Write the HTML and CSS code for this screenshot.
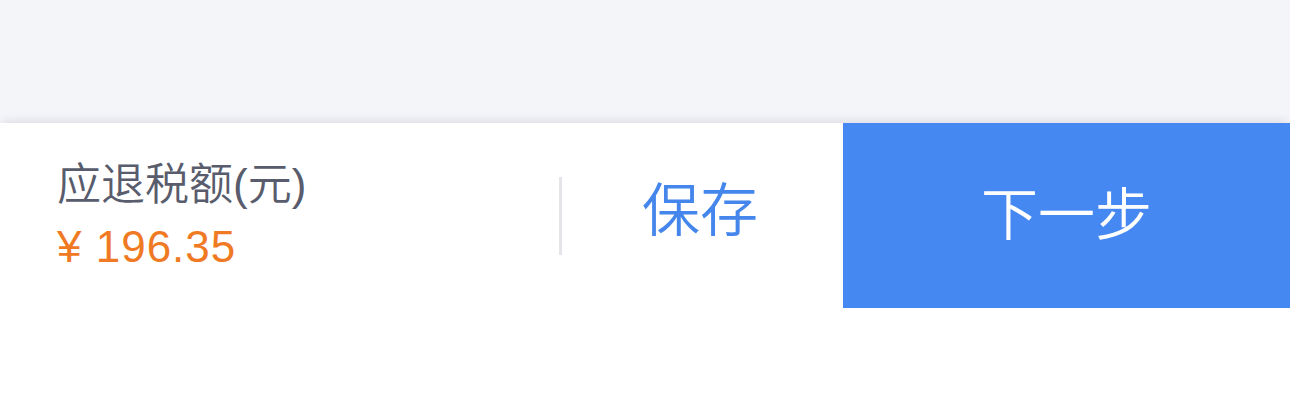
FILE: index.html
```html
<!DOCTYPE html>
<html lang="zh-CN">
<head>
<meta charset="utf-8">
<title>应退税额</title>
<link rel="stylesheet" href="styles.css">
</head>
<body>
<div class="page">
  <div class="content"></div>
  <div class="footer">
    <div class="info">
      <div class="label">应退税额(元)</div>
      <div class="amount">¥ 196.35</div>
    </div>
    <div class="divider"></div>
    <div class="save">保存</div>
    <div class="next">下一步</div>
  </div>
  <div class="safe"></div>
</div>
</body>
</html>
```

FILE: styles.css
```css
html, body {
  margin: 0;
  padding: 0;
  background: #ffffff;
}
body {
  font-family: "Liberation Sans", "Noto Sans CJK SC", sans-serif;
  width: 1290px;
  height: 412px;
  overflow: hidden;
}
.page {
  display: flex;
  flex-direction: column;
  height: 412px;
}
.content {
  height: 123px;
  background: #f4f5f9;
  flex: none;
}
.footer {
  height: 185px;
  flex: none;
  display: flex;
  align-items: center;
  background: #ffffff;
  box-shadow: 0 -5px 9px -3px rgba(40, 50, 80, 0.12);
  position: relative;
}
.info {
  flex: 1;
  padding-left: 57px;
  display: flex;
  flex-direction: column;
  gap: 12px;
}
.label {
  font-size: 44px;
  line-height: 50px;
  font-weight: 350;
  color: #585c6c;
}
.amount {
  font-size: 44px;
  line-height: 50px;
  letter-spacing: 1px;
  color: #f07a23;
}
.divider {
  width: 3px;
  height: 78px;
  background: #e4e5e9;
  flex: none;
}
.save {
  width: 281px;
  height: 185px;
  flex: none;
  text-align: center;
  font-size: 58px;
  font-weight: 350;
  color: #4486eb;
  line-height: 185px;
  margin-top: -10px;
  padding-right: 5px;
  box-sizing: border-box;
}
.next {
  width: 447px;
  height: 185px;
  flex: none;
  background: #4588f1;
  color: #ffffff;
  font-size: 57px;
  font-weight: 350;
  line-height: 185px;
  text-align: center;
}
.safe {
  flex: 1;
  background: #ffffff;
}
```
